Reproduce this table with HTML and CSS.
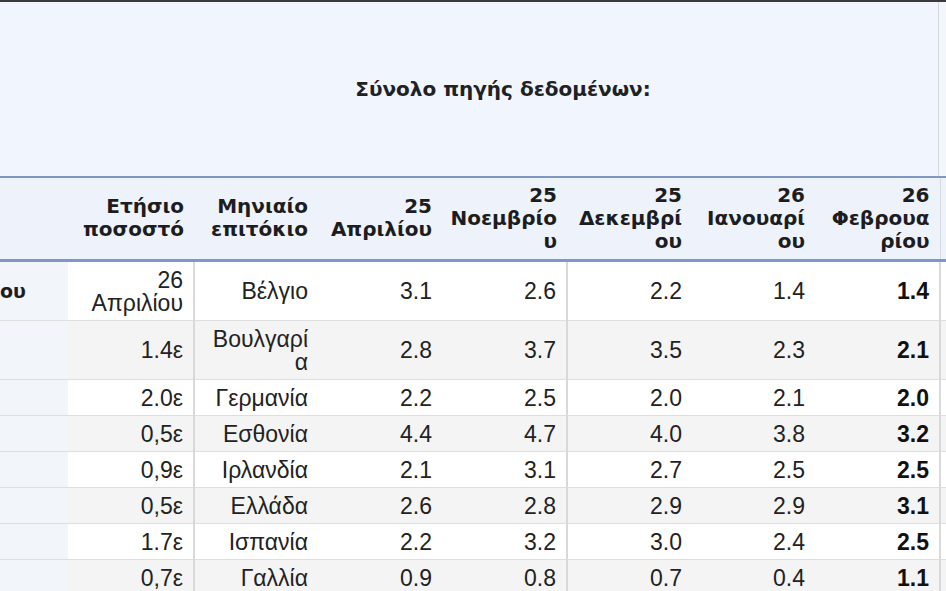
FILE: index.html
```html
<!DOCTYPE html>
<html lang="el">
<head>
<meta charset="utf-8">
<title>Σύνολο πηγής δεδομένων</title>
<link rel="stylesheet" href="styles.css">
</head>
<body>
<div class="page">
  <div class="title-bar">
    <div class="title-main"><h1 class="title">Σύνολο πηγής δεδομένων:</h1></div>
    <div class="title-rest"></div>
  </div>
  <table class="grid">
    <colgroup>
      <col class="w0"><col class="w1"><col class="w2"><col class="w3"><col class="w4"><col class="w5"><col class="w6"><col class="w7"><col class="w8">
    </colgroup>
    <thead>
      <tr>
        <th class="stub"></th>
        <th>Ετήσιο ποσοστό</th>
        <th>Μηνιαίο επιτόκιο</th>
        <th>25 Απριλίου</th>
        <th>25 Νοεμβρίου</th>
        <th>25 Δεκεμβρίου</th>
        <th>26 Ιανουαρίου</th>
        <th>26 Φεβρουαρίου</th>
        <th class="extra"></th>
      </tr>
    </thead>
    <tbody>
      <tr><td class="stub"><b>ου</b></td><td>26 Απριλίου</td><td class="sep">Βέλγιο</td><td>3.1</td><td>2.6</td><td class="sep">2.2</td><td>1.4</td><td class="strong">1.4</td><td class="sep extra"></td></tr>
      <tr><td class="stub"></td><td>1.4ε</td><td class="sep">Βουλγαρία</td><td>2.8</td><td>3.7</td><td class="sep">3.5</td><td>2.3</td><td class="strong">2.1</td><td class="sep extra"></td></tr>
      <tr><td class="stub"></td><td>2.0ε</td><td class="sep">Γερμανία</td><td>2.2</td><td>2.5</td><td class="sep">2.0</td><td>2.1</td><td class="strong">2.0</td><td class="sep extra"></td></tr>
      <tr><td class="stub"></td><td>0,5ε</td><td class="sep">Εσθονία</td><td>4.4</td><td>4.7</td><td class="sep">4.0</td><td>3.8</td><td class="strong">3.2</td><td class="sep extra"></td></tr>
      <tr><td class="stub"></td><td>0,9ε</td><td class="sep">Ιρλανδία</td><td>2.1</td><td>3.1</td><td class="sep">2.7</td><td>2.5</td><td class="strong">2.5</td><td class="sep extra"></td></tr>
      <tr><td class="stub"></td><td>0,5ε</td><td class="sep">Ελλάδα</td><td>2.6</td><td>2.8</td><td class="sep">2.9</td><td>2.9</td><td class="strong">3.1</td><td class="sep extra"></td></tr>
      <tr><td class="stub"></td><td>1.7ε</td><td class="sep">Ισπανία</td><td>2.2</td><td>3.2</td><td class="sep">3.0</td><td>2.4</td><td class="strong">2.5</td><td class="sep extra"></td></tr>
      <tr><td class="stub"></td><td>0,7ε</td><td class="sep">Γαλλία</td><td>0.9</td><td>0.8</td><td class="sep">0.7</td><td>0.4</td><td class="strong">1.1</td><td class="sep extra"></td></tr>
    </tbody>
  </table>
</div>
</body>
</html>
```
FILE: styles.css
```css
html, body {
  margin: 0;
  padding: 0;
  background: #ffffff;
  overflow: hidden;
}

.page {
  width: 1040px;
  border-top: 2px solid #3a3a3c;
  font-family: "Liberation Sans", Arial, sans-serif;
  color: #222222;
}

.title-bar {
  display: flex;
  height: 174px;
  background: #f1f5fd;
}

.title-main {
  width: 939px;
  border-right: 1px solid #d3d8e2;
  display: flex;
  align-items: center;
  justify-content: center;
  padding-left: 68px;
  box-sizing: border-box;
}

.title-rest {
  flex: 1;
  background: #f3f6fb;
}

.title {
  margin: 0;
  font-family: "DejaVu Sans", sans-serif;
  font-weight: bold;
  font-size: 20px;
  color: #202124;
}

.grid {
  border-collapse: collapse;
  table-layout: fixed;
  width: 1040px;
}

.w0 { width: 68px; }
.w1 { width: 126px; }
.w2 { width: 124px; }
.w3 { width: 124px; }
.w4 { width: 125px; }
.w5 { width: 125px; }
.w6 { width: 123px; }
.w7 { width: 125px; }
.w8 { width: 100px; }

.grid thead tr {
  background: #eef3fb;
  border-top: 2px solid #7f97c3;
  border-bottom: 3px solid #7f97c3;
}

.grid th {
  height: 83px;
  box-sizing: border-box;
  vertical-align: middle;
  text-align: right;
  padding: 0 10px 0 6px;
  font-family: "DejaVu Sans", sans-serif;
  font-weight: bold;
  font-size: 20px;
  line-height: 23px;
  color: #1d1d1f;
  overflow-wrap: anywhere;
}

.grid th.extra {
  border-left: 1px solid #d5d9e0;
}

.grid td {
  padding: 7px 10px 5px 6px;
  text-align: right;
  font-size: 23px;
  line-height: 23px;
  border-bottom: 1px solid #dedede;
  overflow-wrap: anywhere;
  vertical-align: middle;
}

.grid tbody tr:nth-child(even) td {
  background: #f4f4f4;
}

.grid td.stub,
.grid tbody tr:nth-child(even) td.stub {
  background: #f2f5fa;
  text-align: left;
  padding-left: 0;
  font-family: "DejaVu Sans", sans-serif;
  font-size: 19px;
  color: #1d1d1f;
}

.grid td.sep {
  border-left: 2px solid #d9d9d9;
}

.grid td.strong {
  font-weight: bold;
  color: #111111;
}
```
